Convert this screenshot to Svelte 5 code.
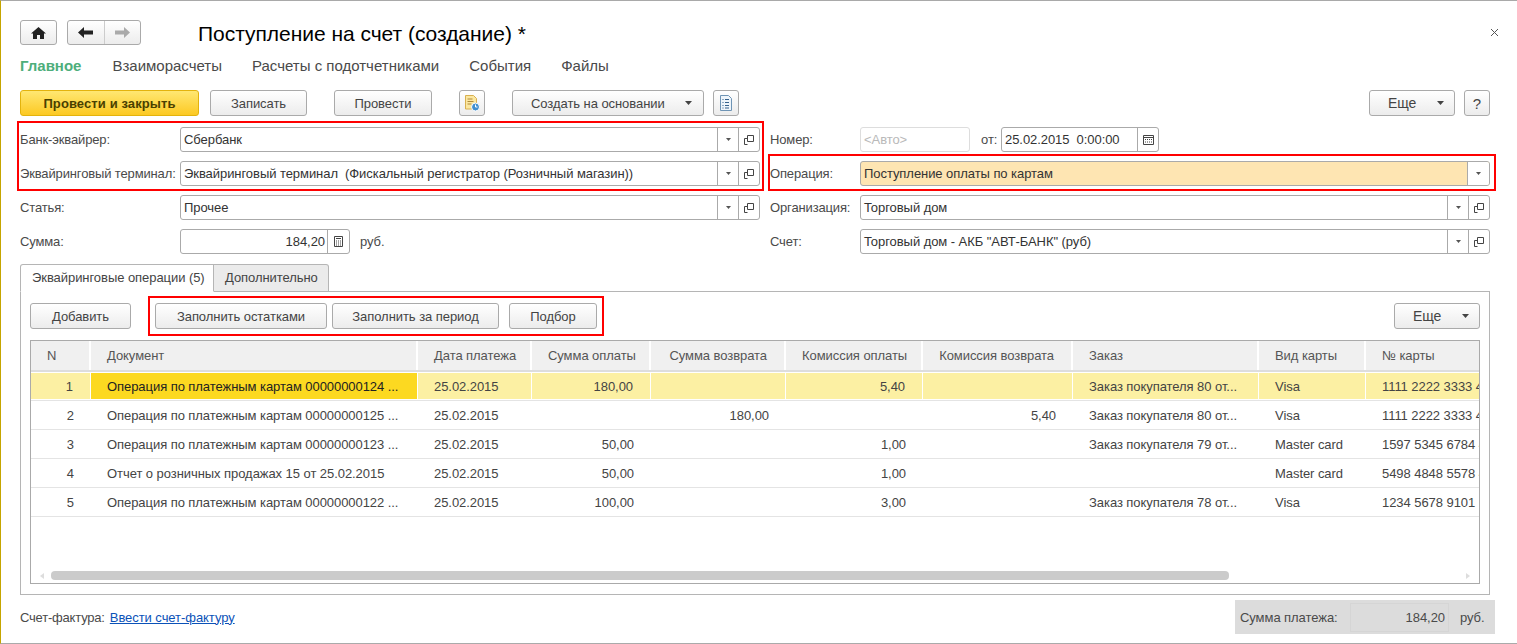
<script>
  const cols = [
    { t: 'N', w: 60, a: 'r' }, { t: 'Документ', w: 327 }, { t: 'Дата платежа', w: 114 },
    { t: 'Сумма оплаты', w: 119, a: 'r' }, { t: 'Сумма возврата', w: 135, a: 'r' },
    { t: 'Комиссия оплаты', w: 137, a: 'r' }, { t: 'Комиссия возврата', w: 150, a: 'r' },
    { t: 'Заказ', w: 186 }, { t: 'Вид карты', w: 107 }, { t: '№ карты', w: 113 }
  ];
  const rows = [
    ['1','Операция по платежным картам 00000000124 ...','25.02.2015','180,00','','5,40','','Заказ покупателя 80 от...','Visa','1111 2222 3333 4444'],
    ['2','Операция по платежным картам 00000000125 ...','25.02.2015','','180,00','','5,40','Заказ покупателя 80 от...','Visa','1111 2222 3333 4444'],
    ['3','Операция по платежным картам 00000000123 ...','25.02.2015','50,00','','1,00','','Заказ покупателя 79 от...','Master card','1597 5345 6784 4565'],
    ['4','Отчет о розничных продажах 15 от 25.02.2015','25.02.2015','50,00','','1,00','','','Master card','5498 4848 5578 4547'],
    ['5','Операция по платежным картам 00000000122 ...','25.02.2015','100,00','','3,00','','Заказ покупателя 78 от...','Visa','1234 5678 9101 1121']
  ];
  const gridCols = cols.map((c) => c.w + 'px').join(' ');
</script>

{#snippet caret()}
  <svg class="caret" width="7" height="4" viewBox="0 0 7 4"><path d="M0 0h7L3.500 4z" fill="#444" /></svg>
{/snippet}
{#snippet small()}
  <svg width="5" height="3" viewBox="0 0 5 3"><path d="M0 0h5L2.500 3z" fill="#555" /></svg>
{/snippet}
{#snippet open()}
  <svg width="10" height="10" viewBox="0 0 10 10" fill="none" stroke="#444"><path d="M3.500 .5h6v6h-6z" /><path d="M3 3.500H.5v6h3" /></svg>
{/snippet}
{#snippet field(value, cls = '', withOpen = true)}
  <div class="field {cls}">
    <span class="val">{value}</span>
    <span class="fb">{@render small()}</span>
    {#if withOpen}<span class="fb">{@render open()}</span>{/if}
  </div>
{/snippet}

<div class="win">
  <header class="top">
    <div class="navs">
      <button class="btn home" aria-label="Домой"><svg width="15" height="12" viewBox="0 0 15 12"><path d="M7.500 0L15 6.500h-2V12H9V8H6v4H2V6.500H0z" fill="#222" /></svg></button>
      <div class="btn hist">
        <span class="h"><svg width="15" height="11" viewBox="0 0 15 11"><path d="M6 0v3.500h9v4H6V11L0 5.500z" fill="#222" /></svg></span>
        <span class="h"><svg width="15" height="11" viewBox="0 0 15 11"><path d="M9 0v3.500H0v4h9V11l6-5.500z" fill="#aaa" /></svg></span>
      </div>
    </div>
    <h1>Поступление на счет (создание) *</h1>
    <svg class="close" width="9" height="9" viewBox="0 0 9 9"><path d="M1 1l7 7M8 1L1 8" stroke="#555" fill="none" /></svg>
  </header>

  <nav class="tabsnav">
    <span class="act">Главное</span><span>Взаиморасчеты</span><span>Расчеты с подотчетниками</span><span>События</span><span>Файлы</span>
  </nav>

  <div class="cmd">
    <button class="btn primary">Провести и закрыть</button>
    <button class="btn w97">Записать</button>
    <button class="btn w98">Провести</button>
    <button class="btn ic" aria-label="Отчет"><svg width="18" height="18" viewBox="0 0 18 18"><path d="M2.500 1.500h8l3 3V15h-11z" fill="#fbe7a0" stroke="#d8b050" /><path d="M4.500 5h5M4.500 7.500h6M4.500 10h4" stroke="#b08a3a" /><circle cx="12.500" cy="13" r="4" fill="#3f8fd0" stroke="#fff" /><path d="M12.500 10.500V13h2" stroke="#fff" fill="none" /></svg></button>
    <button class="btn dd create">Создать на основании {@render caret()}</button>
    <button class="btn ic" aria-label="Документ"><svg width="14" height="16" viewBox="0 0 14 16"><path d="M1.500 .5h8l3 3v12h-11z" fill="#eef5fb" stroke="#6f94b5" /><path d="M3.500 4.500h1M6 4.500h4M3.500 7.500h1M6 7.500h4M3.500 10.500h1M6 10.500h4M3.500 13h1M6 13h4" stroke="#35618c" /></svg></button>
    <div class="spring"></div>
    <button class="btn dd more">Еще {@render caret()}</button>
    <button class="btn help">?</button>
  </div>

  <div class="form">
    <div class="col left">
      <span class="lab">Банк-эквайрер:</span>{@render field('Сбербанк')}
      <span class="lab">Эквайринговый терминал:</span>{@render field('Эквайринговый терминал  (Фискальный регистратор (Розничный магазин))')}
      <span class="lab">Статья:</span>{@render field('Прочее')}
      <span class="lab">Сумма:</span>
      <div class="sumrow">
        <div class="field sum"><span class="val r">184,20</span><span class="fb calc"><svg width="9" height="11" viewBox="0 0 9 11"><path d="M.5.500h8v10h-8z" fill="none" stroke="#444" /><path d="M2 2.500h5M2 5h1M4 5h1M6 5h1M2 7h1M4 7h1M6 7h1M2 9h1M4 9h1M6 9h1" stroke="#444" /></svg></span></div>
        <span class="unit">руб.</span>
      </div>
    </div>
    <div class="col right">
      <span class="lab">Номер:</span>
      <div class="numrow">
        <div class="auto">&lt;Авто&gt;</div>
        <span class="from">от:</span>
        <div class="field date"><span class="val">25.02.2015  0:00:00</span><span class="fb"><svg width="11" height="10" viewBox="0 0 11 10"><path d="M.5.500h10v9H.5z" fill="none" stroke="#444" /><path d="M.5 2.500h10" stroke="#444" /><path d="M2 4.500h1M4 4.500h1M6 4.500h1M8 4.500h1M2 7h1M4 7h1M6 7h1M8 7h1" stroke="#444" /></svg></span></div>
      </div>
      <span class="lab">Операция:</span>{@render field('Поступление оплаты по картам', 'hl', false)}
      <span class="lab">Организация:</span>{@render field('Торговый дом')}
      <span class="lab">Счет:</span>{@render field('Торговый дом - АКБ "АВТ-БАНК" (руб)')}
    </div>
    <i class="mark m1"></i><i class="mark m2"></i>
  </div>

  <div class="tabs">
    <span class="tab on">Эквайринговые операции (5)</span><span class="tab">Дополнительно</span>
  </div>
  <section class="panel">
    <div class="tools">
      <button class="btn add">Добавить</button>
      <div class="boxed">
        <button class="btn fill1">Заполнить остатками</button>
        <button class="btn fill2">Заполнить за период</button>
        <button class="btn pick">Подбор</button>
      </div>
      <div class="spring"></div>
      <button class="btn dd more2">Еще {@render caret()}</button>
    </div>
    <div class="table">
      <div class="clip">
        <div class="row head" style="grid-template-columns:{gridCols}">
          {#each cols as c}<div class="cell" class:num={c.a === 'r'} class:n={c.t === 'N'}><span>{c.t}</span></div>{/each}
        </div>
        {#each rows as r, i}
          <div class="row" class:sel={i === 0} style="grid-template-columns:{gridCols}">
            {#each r as v, j}<div class="cell" class:num={cols[j].a === 'r'} class:cur={i === 0 && j === 1}><span>{v}</span></div>{/each}
          </div>
        {/each}
      </div>
      <div class="scroll">
        <svg width="4" height="6" viewBox="0 0 4 6"><path d="M4 0v6L0 3z" fill="#ddd" /></svg>
        <div class="thumb"></div>
        <svg width="4" height="6" viewBox="0 0 4 6"><path d="M0 0v6l4-3z" fill="#ddd" /></svg>
      </div>
    </div>
  </section>

  <footer class="foot">
    <span class="l">Счет-фактура:</span><a href="#top">Ввести счет-фактуру</a>
    <div class="spring"></div>
    <div class="total"><span class="tl">Сумма платежа:</span><span class="tv">184,20</span><span>руб.</span></div>
  </footer>
</div>

<style>
  :global(body) { margin: 0; background: #fff; }
  * { box-sizing: border-box; }
  .win {
    position: relative; width: 1517px; height: 644px; overflow: hidden; background: #fff;
    border-top: 1px solid #a9a9a9; border-left: 1px solid #c5a500; border-bottom: 1px solid #aaa;
    font: 13px "Liberation Sans", Arial, sans-serif; letter-spacing: -0.06px; color: #4a4a4a; padding: 19px 0 0 19px;
  }
  .btn {
    height: 26px; border: 1px solid #aaa; border-radius: 3px; padding: 0;
    background: linear-gradient(#fff, #ececec); font: inherit; letter-spacing: inherit; color: #444; white-space: pre;
    display: inline-flex; align-items: center; justify-content: center;
  }
  .top { display: flex; align-items: center; height: 25px; }
  .navs { display: flex; gap: 10px; width: 178px; }
  .home { width: 37px; height: 25px; }
  .hist { width: 74px; height: 25px; }
  .h { flex: 1; height: 100%; display: flex; align-items: center; justify-content: center; }
  .h + .h { border-left: 1px solid #ccc; }
  h1 { margin: 0; padding-top: 3px; font: 400 21px "Liberation Sans", Arial, sans-serif; letter-spacing: -0.03px; color: #000; }
  .close { margin-left: auto; margin-right: 18px; }
  .tabsnav { display: flex; gap: 30px; margin-top: 13px; font-size: 15px; letter-spacing: 0; height: 16px; line-height: 16px; color: #4a4a4a; }
  .act { font-weight: 700; color: #4dae7b; margin-right: 1px; }
  .cmd { display: flex; height: 26px; margin-top: 16px; padding-right: 27px; }
  .primary { width: 179px; border-color: #e3b30d; background: linear-gradient(#ffe772, #fcc923); font-weight: 700; letter-spacing: 0.1px; color: #4a4000; margin-right: 11px; }
  .w97 { width: 97px; margin-right: 27px; }
  .w98 { width: 98px; margin-right: 27px; }
  .ic { width: 26px; }
  .dd { justify-content: flex-start; padding-left: 18px; gap: 17px; }
  .create { width: 192px; margin: 0 9px 0 27px; }
  .spring { flex: 1; }
  .more { width: 86px; margin-right: 9px; font-size: 14px; }
  .help { width: 26px; font-size: 15px; }
  .form { position: relative; display: flex; margin-top: 11px; height: 127px; }
  .col { display: grid; grid-auto-rows: 25px; row-gap: 9px; align-items: center; }
  .left { width: 750px; grid-template-columns: 160px 580px; }
  .right { grid-template-columns: 90px 630px; }
  .lab { color: #4a4a4a; line-height: 25px; white-space: pre; letter-spacing: -0.14px; }
  .field {
    display: flex; height: 25px; border: 1px solid #aaa; border-radius: 3px; background: #fff; align-items: stretch; min-width: 0;
  }
  .val { flex: 1; padding: 0 3px; line-height: 23px; color: #333; overflow: hidden; white-space: pre; }
  .val.r { text-align: right; padding-right: 2px; }
  .fb { width: 21px; flex: none; border-left: 1px solid #aaa; display: flex; align-items: center; justify-content: center; }
  .hl { background: #fee5b2; }
  .hl .fb { width: 22px; background: #fff; border-radius: 0 2px 2px 0; }
  .numrow, .sumrow { display: flex; align-items: center; }
  .sum { width: 170px; }
  .sum .fb { width: 22px; }
  .unit { margin-left: 10px; }
  .auto { width: 110px; height: 25px; border: 1px solid #ddd; border-radius: 3px; color: #b9b9b9; line-height: 23px; padding-left: 3px; }
  .from { margin-left: 11px; width: 20px; }
  .date { width: 158px; }
  .mark { position: absolute; border: 2px solid #f00; pointer-events: none; }
  .m1 { left: -3px; top: -6px; width: 747px; height: 70px; }
  .m2 { left: 748px; top: 27px; width: 728px; height: 37px; }
  .tabs { display: flex; margin-top: 10px; height: 28px; position: relative; z-index: 1; }
  .tab { height: 28px; line-height: 26px; background: #ebebeb; border: 1px solid #b5b5b5; border-left: 0; border-radius: 0 3px 0 0; padding: 0 11px; color: #444; width: 115px; white-space: pre; }
  .tab.on { background: #fff; border-left: 1px solid #b5b5b5; border-bottom-color: #fff; border-radius: 3px 0 0 0; width: 194px; padding: 0 0 0 11px; }
  .panel { margin-top: -1px; width: 1470px; height: 304px; border: 1px solid #b5b5b5; padding: 11px 9px 0; }
  .tools { display: flex; height: 26px; }
  .add { width: 101px; margin-right: 24px; }
  .boxed { display: flex; outline: 2px solid #f00; outline-offset: 5px; }
  .fill1 { width: 172px; margin-right: 5px; }
  .fill2 { width: 167px; margin-right: 10px; }
  .pick { width: 88px; }
  .more2 { width: 86px; font-size: 14px; }
  .table { margin-top: 11px; height: 244px; border: 1px solid #aaa; width: 1450px; }
  .clip { overflow: hidden; height: 230px; width: 1448px; }
  .row { display: grid; height: 29px; border-bottom: 1px solid #e4e4e4; }
  .head { height: 31px; border: 0; background: #f0f0f0; border-bottom: 2px solid #ddd; }
  .cell { padding: 1px 16px 0; line-height: 28px; overflow: hidden; color: #444; white-space: pre; }
  .head .cell { padding-top: 0; line-height: 29px; color: #555; border-right: 2px solid #fff; }
  .num { text-align: right; padding-right: 17px; }
  .head .num { padding-right: 17px; }
  .n { text-align: left !important; }
  .cell:last-child { border-right: 0 !important; padding-right: 0; }
  .sel .cell { background: #fcf0a3; border-right: 1px solid #fff; box-shadow: inset 0 -1px #fff, inset 0 1px #fff; }
  .sel .cur { background: #fcd921; color: #222; }
  .scroll { display: flex; align-items: center; height: 9px; padding: 0 9px 0 9px; gap: 7px; }
  .thumb { height: 9px; width: 1178px; background: #cbcbcb; border-radius: 4px; margin-right: auto; }
  .foot { display: flex; align-items: center; height: 34px; margin-top: 5px; width: 1475px; }
  .l { margin-right: 5px; letter-spacing: -0.2px; }
  a { color: #0b52b8; text-decoration: underline; }
  .total { width: 260px; height: 34px; background: #dcdcdc; display: flex; align-items: center; padding-left: 5px; }
  .tl { width: 110px; white-space: pre; }
  .tv { width: 99px; height: 29px; margin-right: 11px; border: 1px solid #d5d5d5; text-align: right; line-height: 27px; padding-right: 3px; }
</style>
